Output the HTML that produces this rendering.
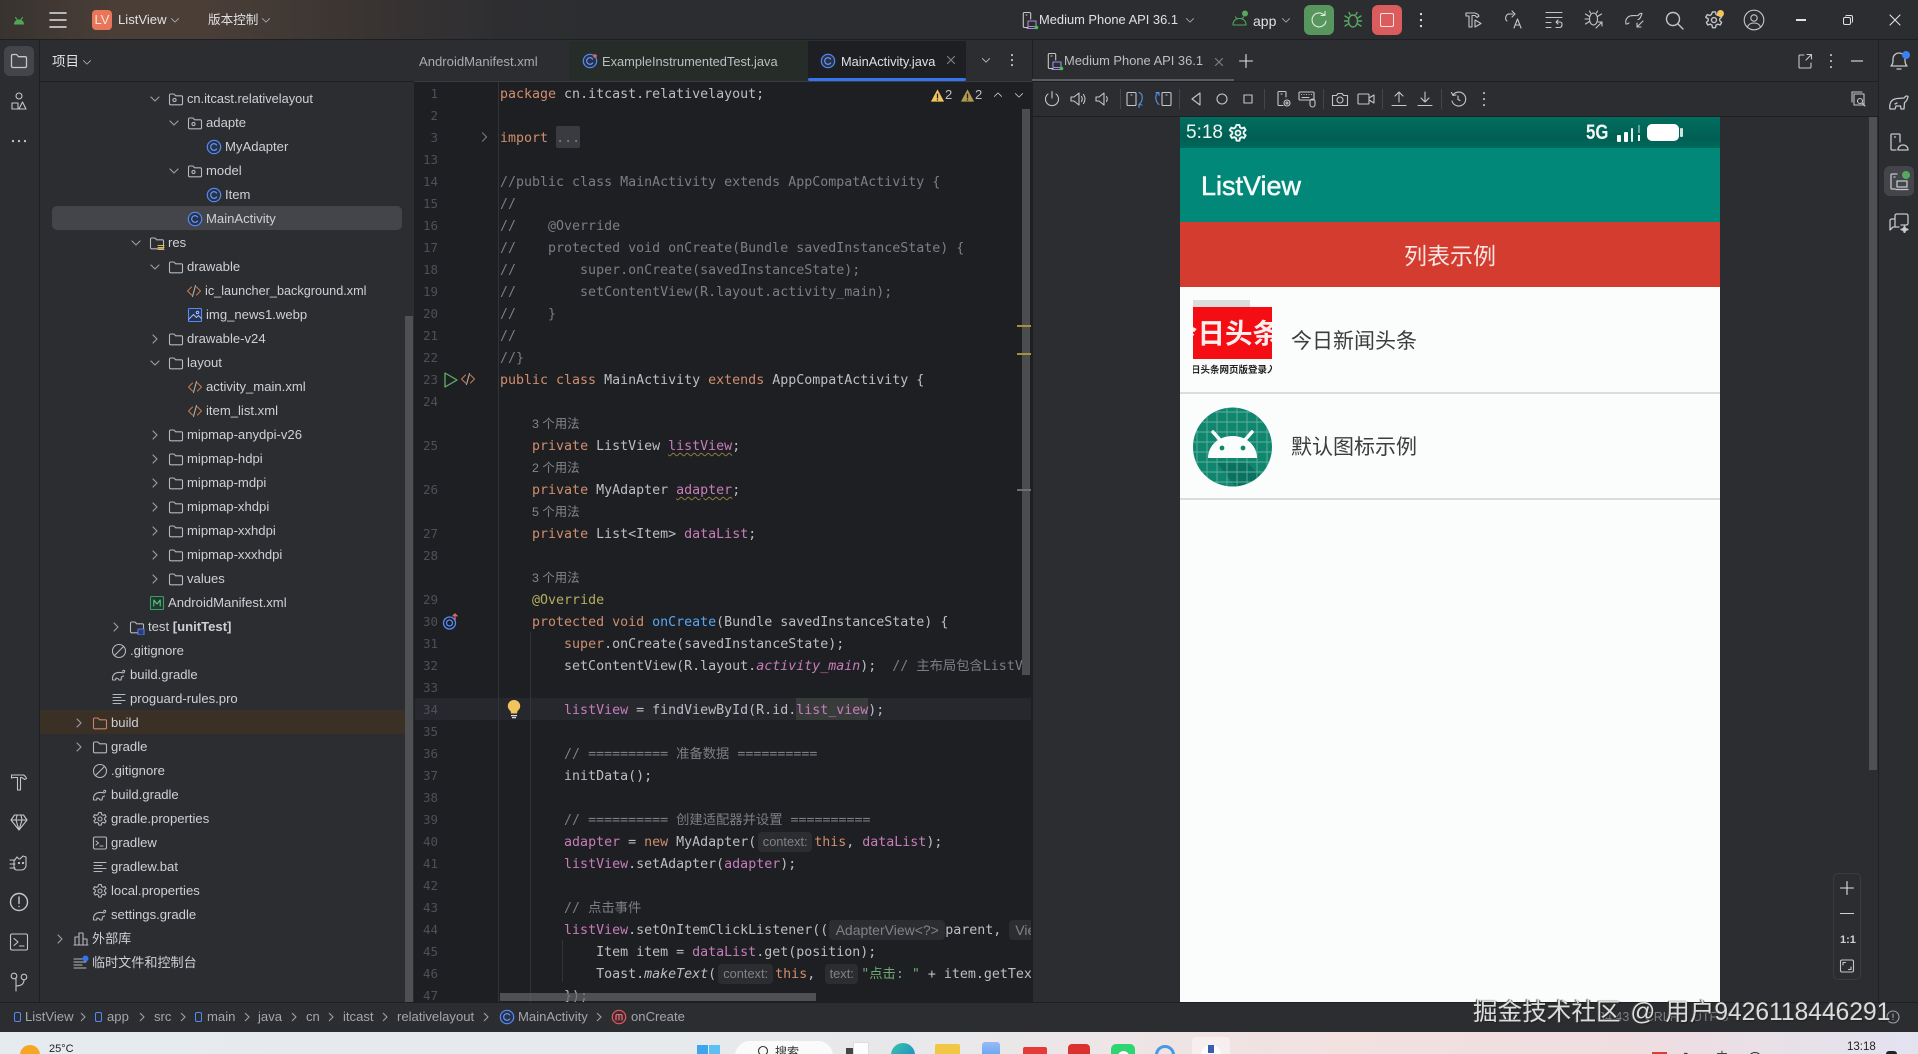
<!DOCTYPE html>
<html lang="zh"><head><meta charset="utf-8"><title>ListView</title>
<style>
*{box-sizing:border-box}
html,body{margin:0;padding:0;width:1918px;height:1054px;overflow:hidden;background:#2b2d30}
body{position:relative;font-family:"Liberation Sans","Noto Sans CJK SC",sans-serif;font-size:13.1px;color:#ced0d6}
.a{position:absolute}
.t{position:absolute;white-space:nowrap}
svg.i{position:absolute;width:20px;height:20px;fill:none;stroke:#c4c6cc;stroke-width:1.1;stroke-linecap:round;stroke-linejoin:round}
.r{position:absolute;height:24px;line-height:24px;white-space:nowrap;display:flex;align-items:center;transform:translateY(1px)}
.r svg{flex:none;fill:none;stroke:#b4b8bf;stroke-width:1.1;stroke-linecap:round;stroke-linejoin:round}
.r svg.ch{width:14px;height:14px;margin-right:6px;stroke:#9da0a8}
.r svg.ic{width:16px;height:16px;margin-right:3px}
pre{margin:0;font-family:"DejaVu Sans Mono","Liberation Mono","Noto Sans CJK SC",monospace;font-size:13.2px;line-height:22px}
#code{position:absolute;left:500px;top:82px;padding-top:2px;width:531px;height:920px;overflow:hidden;color:#bcbec4;font-family:"DejaVu Sans Mono","Liberation Mono","Noto Sans CJK SC",monospace;font-size:13.3px;line-height:22px}
#code div{height:22px;white-space:pre}
#nums{position:absolute;left:410px;top:83px;width:28px;height:919px;overflow:hidden;text-align:right;color:#4b5059;font-size:12.5px}
.k{color:#cf8e6d}.f{color:#c77dbb}.c{color:#7a7e85}.m{color:#56a8f5}.n{color:#b3ae60}.s{color:#6aab73}
.u{display:block;height:22px;line-height:20px;font-family:"Liberation Sans","Noto Sans CJK SC",sans-serif;font-size:12.4px;color:#83868c;margin-left:32px}
.w{text-decoration:underline wavy #8f7c3f 1px;text-underline-offset:2px}
.h{display:inline-block;height:20px;line-height:20px;vertical-align:top;background:#2b2d30;color:#7f8288;border-radius:4px;font-family:"Liberation Sans","Noto Sans CJK SC",sans-serif;font-size:12.8px;text-align:center}
.sep{position:absolute;top:89px;width:1px;height:20px;background:#43454a}
.bc{position:absolute;top:1008px;height:18px;line-height:18px;color:#a3a6ac;font-size:13.1px;white-space:nowrap}
.bch{position:absolute;top:1011px;width:10px;height:12px;fill:none;stroke:#9da0a8;stroke-width:1.1}
</style></head>
<body>
<svg width="0" height="0" style="position:absolute">
<defs>
<symbol id="cr" viewBox="0 0 14 14"><path d="M5 3l4 4-4 4"/></symbol>
<symbol id="cd" viewBox="0 0 14 14"><path d="M3 5l4 4 4-4"/></symbol>
<symbol id="fo" viewBox="0 0 16 16"><path d="M1.5 4.2q0-1.2 1.2-1.2h3.2l1.8 1.8h5.6q1.2 0 1.2 1.2v6.6q0 1.2-1.2 1.2H2.7q-1.2 0-1.2-1.2z"/></symbol>
<symbol id="pk" viewBox="0 0 16 16"><path d="M1.5 4.2q0-1.2 1.2-1.2h3.2l1.8 1.8h5.6q1.2 0 1.2 1.2v6.6q0 1.2-1.2 1.2H2.7q-1.2 0-1.2-1.2z"/><circle cx="6.5" cy="9" r="1.6"/></symbol>
<symbol id="cl" viewBox="0 0 16 16"><circle cx="8" cy="8" r="6.7" fill="#27324c" stroke="#548af7" stroke-width="1.2"/><path d="M10.6 6a3.3 3.3 0 1 0 0 4" stroke="#6f9cf7" fill="none"/></symbol>
<symbol id="xm" viewBox="0 0 16 16"><path d="M5.5 4L1.5 8l4 4M10.5 4l4 4-4 4" stroke="#c4784f" fill="none"/><path d="M9.5 2.5l-3 11" stroke="#b9b2a8" fill="none"/></symbol>
<symbol id="im" viewBox="0 0 16 16"><rect x="1.5" y="1.5" width="13" height="13" rx="1" fill="#27324c" stroke="#548af7"/><path d="M2 12l4.5-4.5 3 3 2-2 3 3" stroke="#9ab8f7" fill="none"/><circle cx="10.5" cy="5.5" r="1.2" stroke="#9ab8f7" fill="none"/></symbol>
<symbol id="mf" viewBox="0 0 16 16"><rect x="1.5" y="1.5" width="13" height="13" rx="1" fill="#1f3a2c" stroke="#3f9a68"/><path d="M4.8 11V5l3.2 4 3.2-4v6" stroke="#57c28b" fill="none"/></symbol>
<symbol id="ig" viewBox="0 0 16 16"><circle cx="8" cy="8" r="6.5"/><path d="M3.5 12.5l9-9"/></symbol>
<symbol id="gr" viewBox="0 0 16 16"><path d="M1.5 13c-.5-3 .8-6 3.5-7 2-.8 5-.6 7-.2 1 .2 2-.8 1.6-2-.8-.8-1.8-.4-2 .5M2.5 13h2l.5-2 2 .5 1 1.500h2l.5-3 2-1"/></symbol>
<symbol id="ge" viewBox="0 0 16 16"><path d="M6.8 1.500h2.400l.4 2 1.400.8 1.900-.7 1.200 2.100-1.500 1.300v1.600l1.500 1.300-1.200 2.100-1.900-.7-1.400.8-.4 2H6.800l-.4-2-1.400-.8-1.900.7-1.200-2.100 1.500-1.300V7.100L1.400 5.800l1.200-2.100 1.900.7 1.400-.8z"/><circle cx="8" cy="8" r="2"/></symbol>
<symbol id="tm" viewBox="0 0 16 16"><rect x="1.5" y="2" width="13" height="12" rx="1.5"/><path d="M4 6l2.500 2L4 10M8 11h3"/></symbol>
<symbol id="tx" viewBox="0 0 16 16"><path d="M2 3.500h12M2 6.500h8M2 9.500h12M2 12.500h8"/></symbol>
<symbol id="dv" viewBox="0 0 20 20"><path d="M9 17.500H5.500q-1.200 0-1.200-1.200V3.700q0-1.200 1.200-1.200h5q1.200 0 1.200 1.200V9"/><path d="M7 5h1"/><rect x="9" y="11" width="8" height="5.500" stroke="#a78bda"/><path d="M8 18.500h10" stroke="#a78bda"/></symbol>
</defs>
</svg>

<!-- title bar -->
<div class="a" style="left:0;top:0;width:1918px;height:40px;background:linear-gradient(90deg,#37332f 0,#4b3e37 6%,#4a3e37 11%,#3b3533 18%,#2e2e31 26%,#2b2d30 32%);border-bottom:1px solid #1e1f22"></div>
<svg class="i" style="left:9px;top:10px;stroke:none;fill:#4fa85a" viewBox="0 0 20 20"><path d="M5 14.500c0-3 2.200-5 5-5s5 2 5 5z"/><path d="M6.500 7.500l1.500 2M13.500 7.500l-1.500 2" stroke="#4fa85a"/></svg>
<svg class="i" style="left:48px;top:10px;stroke:#dfe1e5" viewBox="0 0 20 20"><path d="M2 3h16M2 10h16M2 17h16" stroke-width="1.500"/></svg>
<div class="a" style="left:92px;top:10px;width:20px;height:20px;background:#e8765a;border-radius:4px;color:#fbe3d6;font-size:13px;line-height:20px;text-align:center">LV</div>
<div class="t" style="left:118px;top:12px;line-height:16px;color:#dfe1e5">ListView</div>
<svg class="i" style="left:170px;top:15px;width:10px;height:10px;stroke:#b4b8bf" viewBox="0 0 14 14"><path d="M2 5l5 5 5-5"/></svg>
<div class="t" style="left:208px;top:12px;line-height:16px;color:#dfe1e5;font-size:12.600px">版本控制</div>
<svg class="i" style="left:261px;top:15px;width:10px;height:10px;stroke:#b4b8bf" viewBox="0 0 14 14"><path d="M2 5l5 5 5-5"/></svg>

<svg class="i" style="left:1019px;top:10px" viewBox="0 0 20 20"><use href="#dv"/><circle cx="17.500" cy="17.500" r="1.800" fill="#3ec74a" stroke="none"/></svg>
<div class="t" style="left:1039px;top:12px;line-height:16px;color:#dfe1e5;font-size:12.900px">Medium Phone API 36.1</div>
<svg class="i" style="left:1185px;top:15px;width:10px;height:10px;stroke:#b4b8bf" viewBox="0 0 14 14"><path d="M2 5l5 5 5-5"/></svg>
<svg class="i" style="left:1230px;top:9px;stroke:#4fa85a" viewBox="0 0 20 20"><path d="M3 16c0-4 2.500-6.500 6.500-6.500S16 12 16 16zM5.500 8l1.500 2M13.500 8l-1.500 2"/><circle cx="15" cy="4.500" r="3" fill="#57a85f" stroke="none"/></svg>
<div class="t" style="left:1253px;top:13px;line-height:16px;color:#dfe1e5;font-size:14px">app</div>
<svg class="i" style="left:1281px;top:15px;width:10px;height:10px;stroke:#b4b8bf" viewBox="0 0 14 14"><path d="M2 5l5 5 5-5"/></svg>
<div class="a" style="left:1304px;top:5px;width:30px;height:30px;background:#57965c;border-radius:6px"></div>
<svg class="i" style="left:1309px;top:10px;stroke:#dfe9df" viewBox="0 0 20 20"><path d="M15.500 5.500A7 7 0 1 0 17 11"/><path d="M16 1.500v4h-4"/></svg>
<svg class="i" style="left:1343px;top:10px;stroke:#57a85f;stroke-width:1.400" viewBox="0 0 20 20"><ellipse cx="10" cy="11" rx="4.500" ry="6"/><path d="M2 6l4 2.500M18 6l-4 2.500M1.500 11h4M18.500 11h-4M2 16l4-2.500M18 16l-4-2.500M7 4.500l-1-2M13 4.500l1-2"/></svg>
<div class="a" style="left:1372px;top:5px;width:30px;height:30px;background:#db5c5c;border-radius:6px"></div>
<div class="a" style="left:1380px;top:13px;width:14px;height:14px;border:1.500px solid #fbe3e3;border-radius:2px"></div>
<svg class="i" style="left:1411px;top:10px;stroke:#dfe1e5;stroke-width:2.200" viewBox="0 0 20 20"><path d="M10 4v.1M10 10v.1M10 16v.1"/></svg>

<svg class="i" style="left:1464px;top:10px" viewBox="0 0 20 20"><path d="M2 3h9q3 1 4 3l-2 1.500-2-2H8v11.500H5V6H2z"/><path d="M11 10l6 3.500-6 3.500z"/></svg>
<svg class="i" style="left:1504px;top:10px" viewBox="0 0 20 20"><path d="M9 4H6a4 4 0 0 0-3 7"/><path d="M8 1l3 3-3 3"/><path d="M10 18l3.500-9 3.500 9M11 15h5"/></svg>
<svg class="i" style="left:1544px;top:10px" viewBox="0 0 20 20"><path d="M2 2.500h16M2 7.500h16M2 12.500h5M2 17.500h5"/><path d="M12 12h4q2 0 2 2.500T16 17.500h-4M12 12l2-2M12 12l2 2"/></svg>
<svg class="i" style="left:1584px;top:10px" viewBox="0 0 20 20"><ellipse cx="9.500" cy="9" rx="4" ry="6"/><path d="M1.500 4l4 2.500M17.500 4l-4 2.500M1 9h4M1.500 14l4-2.500M6.500 3L5.500 1M12.500 3l1-2"/><path d="M12 18l6-6M14 12h4v4"/></svg>
<svg class="i" style="left:1624px;top:10px" viewBox="0 0 20 20"><path d="M2 14c-1-4 1-7 4-8 3-1 6 0 8-.5 1-1 2-3 4-2-1 3-2 6-4 6M3 14l2-1"/><path d="M19 11l-6 6M13 13v4h4"/></svg>
<svg class="i" style="left:1664px;top:10px;stroke-width:1.400" viewBox="0 0 20 20"><circle cx="9" cy="9" r="6.500"/><path d="M14 14l5 5"/></svg>
<svg class="i" style="left:1704px;top:10px;width:20px;height:20px" viewBox="0 0 16 16"><use href="#ge"/></svg>
<div class="a" style="left:1717px;top:10px;width:7px;height:7px;background:#f2c55c;border-radius:50%"></div>
<svg class="i" style="left:1743px;top:9px;width:22px;height:22px;stroke-width:1.100" viewBox="0 0 22 22"><circle cx="11" cy="11" r="9.800"/><circle cx="11" cy="9" r="3.200"/><path d="M4.500 18c1-3 4-4 6.500-4s5.500 1 6.500 4"/></svg>
<div class="a" style="left:1796px;top:19px;width:10px;height:1.500px;background:#dfe1e5"></div>
<div class="a" style="left:1843px;top:17px;width:8px;height:8px;border:1.300px solid #dfe1e5;border-radius:2px"></div>
<div class="a" style="left:1845px;top:15px;width:8px;height:8px;border-top:1.300px solid #dfe1e5;border-right:1.300px solid #dfe1e5;border-radius:2px"></div>
<svg class="i" style="left:1885px;top:10px;stroke:#dfe1e5" viewBox="0 0 20 20"><path d="M5 5l10 10M15 5L5 15"/></svg>

<!-- left stripe -->
<div class="a" style="left:0;top:40px;width:40px;height:962px;border-right:1px solid #1e1f22;background:#2b2d30"></div>
<div class="a" style="left:4px;top:46px;width:30px;height:30px;background:#43454a;border-radius:6px"></div>
<svg class="i" style="left:9px;top:51px;stroke-width:1.300" viewBox="0 0 20 20"><path d="M2.500 5q0-1.500 1.500-1.500h3.500l2 2.200H16q1.500 0 1.500 1.500v7.800q0 1.500-1.500 1.500H4q-1.500 0-1.500-1.500z"/></svg>
<svg class="i" style="left:9px;top:91px" viewBox="0 0 20 20"><circle cx="10" cy="5" r="3"/><rect x="3" y="12" width="6" height="6"/><path d="M13.500 11l3.500 7h-7z"/></svg>
<svg class="i" style="left:9px;top:131px;stroke-width:2.200" viewBox="0 0 20 20"><path d="M4 10v.1M10 10v.1M16 10v.1"/></svg>
<svg class="i" style="left:9px;top:772px" viewBox="0 0 20 20"><path d="M2.500 3h12q2 1 3 3.500l-2 1-2.500-2H11.500V18h-3V5.500H4.500L2.500 6z"/></svg>
<svg class="i" style="left:9px;top:812px" viewBox="0 0 20 20"><path d="M5.500 3h9l3.500 5-8 10-8-10zM2 8h16M7 8l3 10 3-10M7 8l1-5M13 8l-1-5"/></svg>
<svg class="i" style="left:9px;top:853px" viewBox="0 0 20 20"><path d="M8 4l2 2h1l3-3 3 1v9q-1 4-5 4H8q-2 0-3-2V8zM1 7h5M1 11h5M1 15h5"/><circle cx="10" cy="10" r=".6"/><circle cx="14" cy="10" r=".6"/></svg>
<svg class="i" style="left:9px;top:892px;stroke-width:1.400" viewBox="0 0 20 20"><circle cx="10" cy="10" r="8.500"/><path d="M10 5v6.500M10 14.500v.1"/></svg>
<svg class="i" style="left:9px;top:932px" viewBox="0 0 20 20"><rect x="1.500" y="2" width="17" height="16" rx="1.500"/><path d="M5 6.500L9 10l-4 3.500M10.500 14H15"/></svg>
<svg class="i" style="left:9px;top:972px" viewBox="0 0 20 20"><circle cx="5" cy="4" r="2.800"/><circle cx="15" cy="5" r="2.800"/><path d="M7 19V6.800M7 14q8 0 8-6.200"/></svg>

<!-- project panel -->
<div class="a" style="left:40px;top:81px;width:374px;height:1px;background:#1e1f22"></div>
<div class="t" style="left:52px;top:54px;line-height:16px;color:#dfe1e5;font-size:13.500px">项目</div>
<svg class="i" style="left:82px;top:57px;width:10px;height:10px;stroke:#b4b8bf" viewBox="0 0 14 14"><path d="M2 5l5 5 5-5"/></svg>
<div class="a" style="left:52px;top:206px;width:350px;height:24px;background:#43454a;border-radius:5px"></div>
<div class="a" style="left:40px;top:710px;width:372px;height:24px;background:#3a3025"></div>
<div class="a" style="left:405px;top:316px;width:8px;height:686px;background:#4e5054"></div>

<div class="r" style="top:86px;left:148px"><svg class="ch"><use href="#cd"/></svg><svg class="ic"><use href="#pk"/></svg><span style="font-size:12.800px">cn.itcast.relativelayout</span></div>
<div class="r" style="top:110px;left:167px"><svg class="ch"><use href="#cd"/></svg><svg class="ic"><use href="#pk"/></svg>adapte</div>
<div class="r" style="top:134px;left:206px"><svg class="ic"><use href="#cl"/></svg>MyAdapter</div>
<div class="r" style="top:158px;left:167px"><svg class="ch"><use href="#cd"/></svg><svg class="ic"><use href="#pk"/></svg>model</div>
<div class="r" style="top:182px;left:206px"><svg class="ic"><use href="#cl"/></svg>Item</div>
<div class="r" style="top:206px;left:187px"><svg class="ic"><use href="#cl"/></svg>MainActivity</div>
<div class="r" style="top:230px;left:129px"><svg class="ch"><use href="#cd"/></svg><svg class="ic" viewBox="0 0 16 16"><use href="#fo"/><path d="M9 10.500h6M9 12.500h6M9 14.500h6" stroke="#e0b84e" fill="none"/></svg>res</div>
<div class="r" style="top:254px;left:148px"><svg class="ch"><use href="#cd"/></svg><svg class="ic"><use href="#fo"/></svg>drawable</div>
<div class="r" style="top:278px;left:186px"><svg class="ic"><use href="#xm"/></svg><span style="font-size:12.700px">ic_launcher_background.xml</span></div>
<div class="r" style="top:302px;left:187px"><svg class="ic"><use href="#im"/></svg>img_news1.webp</div>
<div class="r" style="top:326px;left:148px"><svg class="ch"><use href="#cr"/></svg><svg class="ic"><use href="#fo"/></svg>drawable-v24</div>
<div class="r" style="top:350px;left:148px"><svg class="ch"><use href="#cd"/></svg><svg class="ic"><use href="#fo"/></svg>layout</div>
<div class="r" style="top:374px;left:187px"><svg class="ic"><use href="#xm"/></svg>activity_main.xml</div>
<div class="r" style="top:398px;left:187px"><svg class="ic"><use href="#xm"/></svg>item_list.xml</div>
<div class="r" style="top:422px;left:148px"><svg class="ch"><use href="#cr"/></svg><svg class="ic"><use href="#fo"/></svg>mipmap-anydpi-v26</div>
<div class="r" style="top:446px;left:148px"><svg class="ch"><use href="#cr"/></svg><svg class="ic"><use href="#fo"/></svg>mipmap-hdpi</div>
<div class="r" style="top:470px;left:148px"><svg class="ch"><use href="#cr"/></svg><svg class="ic"><use href="#fo"/></svg>mipmap-mdpi</div>
<div class="r" style="top:494px;left:148px"><svg class="ch"><use href="#cr"/></svg><svg class="ic"><use href="#fo"/></svg>mipmap-xhdpi</div>
<div class="r" style="top:518px;left:148px"><svg class="ch"><use href="#cr"/></svg><svg class="ic"><use href="#fo"/></svg>mipmap-xxhdpi</div>
<div class="r" style="top:542px;left:148px"><svg class="ch"><use href="#cr"/></svg><svg class="ic"><use href="#fo"/></svg>mipmap-xxxhdpi</div>
<div class="r" style="top:566px;left:148px"><svg class="ch"><use href="#cr"/></svg><svg class="ic"><use href="#fo"/></svg>values</div>
<div class="r" style="top:590px;left:149px"><svg class="ic"><use href="#mf"/></svg>AndroidManifest.xml</div>
<div class="r" style="top:614px;left:109px"><svg class="ch"><use href="#cr"/></svg><svg class="ic" viewBox="0 0 16 16"><use href="#fo"/><rect x="9" y="10" width="6" height="6" fill="#2b3a70" stroke="#4f7bf0"/></svg>test&nbsp;<b>[unitTest]</b></div>
<div class="r" style="top:638px;left:111px"><svg class="ic"><use href="#ig"/></svg>.gitignore</div>
<div class="r" style="top:662px;left:111px"><svg class="ic"><use href="#gr"/></svg>build.gradle</div>
<div class="r" style="top:686px;left:111px"><svg class="ic"><use href="#tx"/></svg>proguard-rules.pro</div>
<div class="r" style="top:710px;left:72px"><svg class="ch"><use href="#cr"/></svg><svg class="ic" style="stroke:#c9826a"><use href="#fo"/></svg>build</div>
<div class="r" style="top:734px;left:72px"><svg class="ch"><use href="#cr"/></svg><svg class="ic"><use href="#fo"/></svg>gradle</div>
<div class="r" style="top:758px;left:92px"><svg class="ic"><use href="#ig"/></svg>.gitignore</div>
<div class="r" style="top:782px;left:92px"><svg class="ic"><use href="#gr"/></svg>build.gradle</div>
<div class="r" style="top:806px;left:92px"><svg class="ic"><use href="#ge"/></svg>gradle.properties</div>
<div class="r" style="top:830px;left:92px"><svg class="ic"><use href="#tm"/></svg>gradlew</div>
<div class="r" style="top:854px;left:92px"><svg class="ic"><use href="#tx"/></svg>gradlew.bat</div>
<div class="r" style="top:878px;left:92px"><svg class="ic"><use href="#ge"/></svg>local.properties</div>
<div class="r" style="top:902px;left:92px"><svg class="ic"><use href="#gr"/></svg>settings.gradle</div>
<div class="r" style="top:926px;left:53px"><svg class="ch"><use href="#cr"/></svg><svg class="ic" viewBox="0 0 16 16"><path d="M2 14V6h4v8M6 14V2h4v12M10 14V8h4v6M1 14h14"/></svg>外部库</div>
<div class="r" style="top:950px;left:73px"><svg class="ic" viewBox="0 0 16 16"><path d="M1 6h8M1 9h12M1 12h8M1 15h12" transform="translate(0 -2)"/><circle cx="12.500" cy="3.500" r="3" fill="#3574f0" stroke="none"/></svg>临时文件和控制台</div>

<!-- editor -->
<div class="a" style="left:414px;top:41px;width:618px;height:40px;background:#2b2d30"></div>
<div class="a" style="left:414px;top:81px;width:618px;height:921px;background:#1e1f22;border-top:1px solid #393b40"></div>
<div class="a" style="left:569px;top:41px;width:239px;height:39px;background:#262c27"></div>
<div class="a" style="left:808px;top:41px;width:158px;height:40px;background:#1e1f22"></div>
<div class="t" style="left:419px;top:54px;line-height:16px;color:#a8abb1;font-size:13.100px">AndroidManifest.xml</div>
<svg class="i" style="left:582px;top:53px;width:16px;height:16px" viewBox="0 0 16 16"><use href="#cl"/><circle cx="13" cy="3" r="1.800" fill="#d86c6c" stroke="none"/></svg>
<div class="t" style="left:602px;top:54px;line-height:16px;color:#bcbec4;font-size:12.850px">ExampleInstrumentedTest.java</div>
<svg class="i" style="left:820px;top:53px;width:16px;height:16px" viewBox="0 0 16 16"><use href="#cl"/></svg>
<div class="t" style="left:841px;top:54px;line-height:16px;color:#dfe1e5;font-size:12.800px">MainActivity.java</div>
<svg class="i" style="left:946px;top:55px;width:10px;height:10px;stroke:#7f8288" viewBox="0 0 10 10"><path d="M1.500 1.500l7 7M8.500 1.500l-7 7"/></svg>
<div class="a" style="left:808px;top:78px;width:158px;height:3px;background:#3574f0;border-radius:2px"></div>
<svg class="i" style="left:981px;top:55px;width:10px;height:10px;stroke:#ced0d6" viewBox="0 0 14 14"><path d="M2 5l5 5 5-5"/></svg>
<svg class="i" style="left:1002px;top:50px;stroke:#ced0d6;stroke-width:2" viewBox="0 0 20 20"><path d="M10 5v.1M10 10v.1M10 15v.1"/></svg>

<div class="a" style="left:415px;top:698px;width:616px;height:22px;background:#26282e"></div>
<div class="a" style="left:796px;top:698px;width:72px;height:22px;background:#373b39"></div>
<div class="a" style="left:556px;top:126px;width:24px;height:22px;background:#393b40;border-radius:2px"></div>
<div class="a" style="left:498px;top:82px;width:1px;height:920px;background:#313438"></div>
<div class="a" style="left:530px;top:632px;width:1px;height:370px;background:#313438"></div>
<div class="a" style="left:562px;top:940px;width:1px;height:42px;background:#313438"></div>

<pre id="nums">1
2
3
13
14
15
16
17
18
19
20
21
22
23
24

25

26

27
28

29
30
31
32
33
34
35
36
37
38
39
40
41
42
43
44
45
46
47</pre>
<div id="code">
<div><span class="k">package</span> cn.itcast.relativelayout;</div>
<div></div>
<div><span class="k">import</span> <span class="c">...</span></div>
<div></div>
<div><span class="c">//public class MainActivity extends AppCompatActivity {</span></div>
<div><span class="c">//</span></div>
<div><span class="c">//    @Override</span></div>
<div><span class="c">//    protected void onCreate(Bundle savedInstanceState) {</span></div>
<div><span class="c">//        super.onCreate(savedInstanceState);</span></div>
<div><span class="c">//        setContentView(R.layout.activity_main);</span></div>
<div><span class="c">//    }</span></div>
<div><span class="c">//</span></div>
<div><span class="c">//}</span></div>
<div><span class="k">public class</span> MainActivity <span class="k">extends</span> AppCompatActivity {</div>
<div></div>
<div><span class="u">3 个用法</span></div>
<div>    <span class="k">private</span> ListView <span class="f w">listView</span>;</div>
<div><span class="u">2 个用法</span></div>
<div>    <span class="k">private</span> MyAdapter <span class="f w">adapter</span>;</div>
<div><span class="u">5 个用法</span></div>
<div>    <span class="k">private</span> List&lt;Item&gt; <span class="f">dataList</span>;</div>
<div></div>
<div><span class="u">3 个用法</span></div>
<div>    <span class="n">@Override</span></div>
<div>    <span class="k">protected void</span> <span class="m">onCreate</span>(Bundle savedInstanceState) {</div>
<div>        <span class="k">super</span>.onCreate(savedInstanceState);</div>
<div>        setContentView(R.layout.<span class="f"><i>activity_main</i></span>);  <span class="c">// 主布局包含ListView</span></div>
<div></div>
<div>        <span class="f">listView</span> = findViewById(R.id.<span class="f">list_view</span>);</div>
<div></div>
<div>        <span class="c">// ========== 准备数据 ==========</span></div>
<div>        initData();</div>
<div></div>
<div>        <span class="c">// ========== 创建适配器并设置 ==========</span></div>
<div>        <span class="f">adapter</span> = <span class="k">new</span> MyAdapter(<span class="h" style="width:54px;margin:0 2px 0 2px">context:</span><span class="k">this</span>, <span class="f">dataList</span>);</div>
<div>        <span class="f">listView</span>.setAdapter(<span class="f">adapter</span>);</div>
<div></div>
<div>        <span class="c">// 点击事件</span></div>
<div>        <span class="f">listView</span>.setOnItemClickListener((<span class="h" style="width:116px;margin:0 0 0 1px;font-size:14px">AdapterView&lt;?&gt;</span>parent,<span class="h" style="width:40px;margin:0 0 0 8px;text-align:left;padding-left:6px;font-size:14px">View</span></div>
<div>            Item item = <span class="f">dataList</span>.get(position);</div>
<div>            Toast.<i>makeText</i>(<span class="h" style="width:55px;margin:0 2px 0 2px">context:</span><span class="k">this</span>,<span class="h" style="width:33px;margin:0 3px 0 10px">text:</span><span class="s">"点击: "</span> + item.getText());</div>
<div>        });</div>
</div>

<!-- gutter icons -->
<svg class="i" style="left:478px;top:131px;width:12px;height:12px;stroke:#7f8288" viewBox="0 0 14 14"><path d="M5 2l5 5-5 5"/></svg>
<svg class="i" style="left:441px;top:370px;stroke:#5fad65;stroke-width:1.300" viewBox="0 0 20 20"><path d="M4 3l12 7-12 7z"/></svg>
<svg class="i" style="left:460px;top:371px;width:16px;height:16px" viewBox="0 0 16 16"><use href="#xm"/></svg>
<svg class="i" style="left:441px;top:612px;stroke:#548af7;stroke-width:1.300" viewBox="0 0 20 20"><circle cx="8.500" cy="11" r="6"/><circle cx="8.500" cy="11" r="3"/><path d="M14 8V2M12 4l2-2 2 2" stroke="#e06c6c"/></svg>
<svg class="i" style="left:504px;top:699px;stroke:none;fill:#f2c55c" viewBox="0 0 20 20"><path d="M10 1a6 6 0 0 0-3.500 11l.5 2.500h6l.5-2.500A6 6 0 0 0 10 1z"/><path d="M7 16h6v1.200H7zM8 18h4v1.200H8z" fill="#dfe1e5"/></svg>

<!-- warnings -->
<svg class="i" style="left:930px;top:88px;width:15px;height:15px;stroke:none;fill:#f2c55c" viewBox="0 0 16 16"><path d="M8 1.500l7 13H1z"/><path d="M7.300 6h1.400v5H7.300zM7.300 12h1.400v1.300H7.300z" fill="#1e1f22"/></svg>
<div class="t" style="left:945px;top:87px;line-height:16px;color:#bcbec4">2</div>
<svg class="i" style="left:960px;top:88px;width:15px;height:15px;stroke:none;fill:#b39a4f" viewBox="0 0 16 16"><path d="M8 1.500l7 13H1z"/><path d="M7.300 6h1.400v5H7.300zM7.300 12h1.400v1.300H7.300z" fill="#1e1f22"/></svg>
<div class="t" style="left:975px;top:87px;line-height:16px;color:#bcbec4">2</div>
<svg class="i" style="left:993px;top:90px;width:10px;height:10px;stroke:#ced0d6" viewBox="0 0 14 14"><path d="M2 9l5-5 5 5"/></svg>
<svg class="i" style="left:1014px;top:90px;width:10px;height:10px;stroke:#ced0d6" viewBox="0 0 14 14"><path d="M2 5l5 5 5-5"/></svg>

<!-- editor scrollbars -->
<div class="a" style="left:1022px;top:109px;width:8px;height:566px;background:#4a4c50"></div>
<div class="a" style="left:1017px;top:325px;width:14px;height:2px;background:#a88f3c"></div>
<div class="a" style="left:1017px;top:353px;width:14px;height:2px;background:#a88f3c"></div>
<div class="a" style="left:1017px;top:489px;width:14px;height:2px;background:#6b6d70"></div>
<div class="a" style="left:500px;top:993px;width:316px;height:8px;background:rgba(95,97,102,.75)"></div>

<!-- emulator panel -->
<div class="a" style="left:1032px;top:40px;width:1px;height:962px;background:#1e1f22"></div>
<div class="a" style="left:1033px;top:81px;width:845px;height:1px;background:#1e1f22"></div>
<div class="a" style="left:1033px;top:116px;width:845px;height:1px;background:#1e1f22"></div>
<div class="a" style="left:1878px;top:40px;width:1px;height:962px;background:#1e1f22"></div>
<svg class="i" style="left:1044px;top:51px" viewBox="0 0 20 20"><use href="#dv"/><circle cx="17.500" cy="17.500" r="1.800" fill="#3ec74a" stroke="none"/></svg>
<div class="t" style="left:1064px;top:53px;line-height:16px;color:#bcbec4;font-size:12.900px">Medium Phone API 36.1</div>
<svg class="i" style="left:1214px;top:57px;width:10px;height:10px;stroke:#7f8288" viewBox="0 0 10 10"><path d="M1.500 1.500l7 7M8.500 1.500l-7 7"/></svg>
<svg class="i" style="left:1236px;top:51px;stroke:#dfe1e5" viewBox="0 0 20 20"><path d="M10 3.500v13M3.500 10h13"/></svg>
<div class="a" style="left:1032px;top:79px;width:202px;height:2px;background:#5a5d63"></div>
<svg class="i" style="left:1795px;top:51px" viewBox="0 0 20 20"><path d="M9 4H5q-1 0-1 1v11q0 1 1 1h10q1 0 1-1v-4M11 9l5-5M12 3.500h4.500V8"/></svg>
<svg class="i" style="left:1821px;top:51px;stroke-width:2" viewBox="0 0 20 20"><path d="M10 4v.1M10 10v.1M10 16v.1"/></svg>
<div class="a" style="left:1851px;top:60px;width:12px;height:1.500px;background:#8d9096"></div>

<svg class="i" style="left:1042px;top:89px" viewBox="0 0 20 20"><path d="M6 5a6.500 6.500 0 1 0 8 0M10 2.500V9"/></svg>
<svg class="i" style="left:1068px;top:89px" viewBox="0 0 20 20"><path d="M3 8v4h3l5 4V4L6 8zM13.500 7.500q1.500 2.500 0 5M15.500 5.500q3 4.500 0 9"/></svg>
<svg class="i" style="left:1092px;top:89px" viewBox="0 0 20 20"><path d="M4 8v4h3l5 4V4L7 8zM14.500 7.500q1.500 2.500 0 5"/></svg>
<div class="sep" style="left:1120px"></div>
<svg class="i" style="left:1125px;top:89px" viewBox="0 0 20 20"><rect x="2" y="3.500" width="9" height="13" rx="1"/><path d="M6 6h1"/><path d="M14 3.500q4 1 3 7-.5 3-3 5M14 15.500l3 .5M14 15.500v3" stroke="#5b8ee8"/></svg>
<svg class="i" style="left:1153px;top:89px" viewBox="0 0 20 20"><rect x="9" y="3.500" width="9" height="13" rx="1"/><path d="M13 6h1"/><path d="M6 3.500q-4 1-3 7 .5 3 3 5M6 3.500v3M6 3.500l-3 0" stroke="#5b8ee8"/></svg>
<div class="sep" style="left:1179px"></div>
<svg class="i" style="left:1186px;top:89px" viewBox="0 0 20 20"><path d="M14 4v12L6 10z"/></svg>
<svg class="i" style="left:1212px;top:89px" viewBox="0 0 20 20"><circle cx="10" cy="10" r="5"/></svg>
<svg class="i" style="left:1238px;top:89px" viewBox="0 0 20 20"><rect x="6" y="6" width="8" height="8"/></svg>
<div class="sep" style="left:1264px"></div>
<svg class="i" style="left:1273px;top:89px" viewBox="0 0 20 20"><path d="M10 16.500H6q-1 0-1-1v-12q0-1 1-1h6q1 0 1 1V8M8 5h1"/><circle cx="14" cy="14" r="3"/><circle cx="14" cy="14" r="1"/></svg>
<svg class="i" style="left:1297px;top:89px" viewBox="0 0 20 20"><rect x="2" y="3" width="15" height="8" rx="1"/><path d="M4.500 5.500h.1M7 5.500h.1M9.500 5.500h.1M12 5.500h.1M14.500 5.500h.1M5 8.500h7"/><rect x="13" y="10" width="5" height="8" rx="2.500"/></svg>
<div class="sep" style="left:1323px"></div>
<svg class="i" style="left:1330px;top:89px" viewBox="0 0 20 20"><path d="M2.500 6.500h4l1.500-2h4l1.500 2h4v10h-15z"/><circle cx="10" cy="11" r="3"/></svg>
<svg class="i" style="left:1356px;top:89px" viewBox="0 0 20 20"><rect x="2" y="5" width="11" height="10" rx="1"/><path d="M13 9l5-3v8l-5-3"/></svg>
<div class="sep" style="left:1382px"></div>
<svg class="i" style="left:1389px;top:89px" viewBox="0 0 20 20"><path d="M10 13V3M6 7l4-4 4 4M3 16.500h14"/></svg>
<svg class="i" style="left:1415px;top:89px" viewBox="0 0 20 20"><path d="M10 3v10M6 9l4 4 4-4M3 16.500h14"/></svg>
<div class="sep" style="left:1441px"></div>
<svg class="i" style="left:1448px;top:89px" viewBox="0 0 20 20"><path d="M5 6a7 7 0 1 1-1 6M3.500 3.500L5 6.500l3-.5M10 7v3.500l2 1"/></svg>
<svg class="i" style="left:1474px;top:89px;stroke-width:2" viewBox="0 0 20 20"><path d="M10 4v.1M10 10v.1M10 16v.1"/></svg>
<svg class="i" style="left:1848px;top:89px" viewBox="0 0 20 20"><path d="M14 3H4v10M6 5h10v11H6z"/><circle cx="12" cy="12" r="2.500"/><path d="M14 14l3 3"/></svg>

<!-- phone -->
<div class="a" style="left:1180px;top:117px;width:540px;height:885px;background:#fbfcfc;overflow:hidden">
  <div class="a" style="left:0;top:0;width:540px;height:31px;background:linear-gradient(#006e60,#005f53 70%,#00695c)"></div>
  <div class="t" style="left:6px;top:5px;line-height:22px;font-size:19px;color:#eef6f4">5:18</div>
  <svg class="i" style="left:48px;top:6px;stroke:#eef6f4;stroke-width:1.500" viewBox="0 0 16 16"><use href="#ge"/></svg>
  <div class="t" style="left:406px;top:3px;line-height:26px;font-size:21px;font-weight:bold;color:#f3f8f7;transform-origin:left;transform:scaleX(.8)">5G</div>
  <div class="a" style="left:437px;top:18px;width:4px;height:7px;background:#fff;border-radius:1px"></div>
  <div class="a" style="left:444px;top:15px;width:4px;height:10px;background:#fff;border-radius:1px"></div>
  <div class="a" style="left:451px;top:11px;width:2px;height:14px;background:#e6f2f0;border-radius:1px"></div>
  <div class="a" style="left:458px;top:8px;width:2px;height:8px;background:#5aa79b"></div>
  <div class="a" style="left:458px;top:18px;width:2px;height:6px;background:#fff"></div>
  <div class="a" style="left:467px;top:7px;width:32px;height:17px;background:#fff;border-radius:5px"></div>
  <div class="a" style="left:500px;top:11px;width:2.500px;height:9px;background:#cfe3df;border-radius:1px"></div>
  <div class="a" style="left:0;top:31px;width:540px;height:74px;background:#018878"></div>
  <div class="t" style="left:21px;top:53px;line-height:32px;font-size:27px;color:#f7fbfa;-webkit-text-stroke:.5px #f7fbfa">ListView</div>
  <div class="a" style="left:0;top:105px;width:540px;height:65px;background:#d43c30;color:#f6e6e4;text-align:center;line-height:69px;font-size:23px">列表示例</div>
  <!-- row 1 -->
  <div class="a" style="left:13px;top:183px;width:79px;height:75px;background:#fbfbfb;overflow:hidden">
    <div class="a" style="left:0;top:0;width:57px;height:7px;background:#dcdcdc"></div>
    <div class="a" style="left:0;top:7px;width:79px;height:52px;background:#f40d13;color:#fdeeee;font-weight:bold;font-size:27.500px;line-height:54px;white-space:nowrap;overflow:hidden"><span style="margin-left:-23px">今日头条</span></div>
    <div class="t" style="left:-2px;top:65px;font-size:9.500px;line-height:11px;font-weight:bold;color:#222">日头条网页版登录入口</div>
  </div>
  <div class="t" style="left:111px;top:210px;line-height:30px;font-size:21px;color:#3c3c3c">今日新闻头条</div>
  <div class="a" style="left:0;top:275px;width:540px;height:1.500px;background:#dcdcdc"></div>
  <!-- row 2 -->
  <svg class="a" style="left:13px;top:290px" width="79" height="80" viewBox="0 0 79 80">
    <defs><clipPath id="cc"><circle cx="39.5" cy="40" r="39.5"/></clipPath></defs>
    <circle cx="39.5" cy="40" r="39.5" fill="#10866f"/>
    <g clip-path="url(#cc)">
      <path d="M24 56h31L80 82v2H46z" fill="#0a6b5c" opacity=".8"/>
      <path d="M4 0v80M14 0v80M24 0v80M34 0v80M44 0v80M54 0v80M64 0v80M74 0v80M0 5h79M0 15h79M0 25h79M0 35h79M0 45h79M0 55h79M0 65h79M0 75h79" stroke="#5fb09d" stroke-width=".9" fill="none"/>
      <path d="M15 51c0-12 10-22 24.500-22S64 39 64 51z" fill="#fbfdfc"/>
      <path d="M28 34l-8-9M51 34l8-9" stroke="#fbfdfc" stroke-width="3.500" stroke-linecap="round"/>
      <circle cx="29" cy="41" r="2.400" fill="#10866f"/><circle cx="50" cy="41" r="2.400" fill="#10866f"/>
    </g>
  </svg>
  <div class="t" style="left:111px;top:316px;line-height:30px;font-size:21px;color:#3c3c3c">默认图标示例</div>
  <div class="a" style="left:0;top:381px;width:540px;height:1.500px;background:#dcdcdc"></div>
</div>
<div class="a" style="left:1869px;top:117px;width:8px;height:653px;background:#4e5054"></div>

<!-- zoom control -->
<div class="a" style="left:1833px;top:873px;width:28px;height:107px;border:1px solid #393b40;border-radius:5px"></div>
<svg class="i" style="left:1837px;top:878px;stroke:#dfe1e5" viewBox="0 0 20 20"><path d="M10 3.500v13M3.500 10h13"/></svg>
<div class="a" style="left:1840px;top:913px;width:14px;height:1.200px;background:#ced0d6"></div>
<div class="t" style="left:1840px;top:932px;line-height:16px;font-size:11px;font-weight:bold;color:#ced0d6">1:1</div>
<svg class="i" style="left:1839px;top:958px;width:16px;height:16px" viewBox="0 0 16 16"><rect x="1.500" y="2" width="13" height="12" rx="1.500"/><path d="M4 7V4.500h2.500M12 9v2.500H9.500"/></svg>

<!-- right stripe -->
<svg class="i" style="left:1888px;top:50px;width:22px;height:22px;stroke-width:1.300" viewBox="0 0 22 22"><path d="M3 16c2-2 2-4 2-7a6 6 0 0 1 12 0c0 3 0 5 2 7zM9 19h4"/></svg>
<div class="a" style="left:1902px;top:51px;width:8px;height:8px;background:#3d7ff0;border-radius:50%"></div>
<svg class="i" style="left:1888px;top:91px;width:22px;height:22px;stroke-width:1.300" viewBox="0 0 22 22"><path d="M2 18c-1-5 1-9 5-10 3-1 7-.5 9-1 1-1 2-3 4-1.500-.5 2.500-1.500 5-3.500 6l-.5 6.500h-3l-.5-3H8l-1 3H4zM7 13l2-1"/></svg>
<svg class="i" style="left:1888px;top:131px;width:22px;height:22px;stroke-width:1.300" viewBox="0 0 22 22"><path d="M8 19H4q-1 0-1-1V4q0-1 1-1h7q1 0 1 1v7M6.500 6h1M10 19c0-3 2-5 5-5s5 2 5 5z"/></svg>
<div class="a" style="left:1884px;top:166px;width:30px;height:30px;background:#43454a;border-radius:6px"></div>
<svg class="i" style="left:1888px;top:170px;width:22px;height:22px;stroke-width:1.300" viewBox="0 0 22 22"><path d="M7 19H4q-1 0-1-1V5q0-1 1-1h5M6 7h1"/><rect x="9" y="11" width="10" height="6"/><path d="M8 19.500h12"/></svg>
<div class="a" style="left:1902px;top:171px;width:8px;height:8px;background:#57a85f;border-radius:50%"></div>
<svg class="i" style="left:1888px;top:211px;width:22px;height:22px;stroke-width:1.300" viewBox="0 0 22 22"><path d="M7 15V5q0-2 2-2h9q2 0 2 2v7q0 2-2 2h-5M7 8H4q-2 0-2 2v9l3-3h6"/><path d="M16.500 15l1 2.500 2.500 1-2.500 1-1 2.500-1-2.500-2.500-1 2.500-1z" fill="#ced0d6"/></svg>

<!-- status bar -->
<div class="a" style="left:0;top:1002px;width:1918px;height:30px;background:#2b2d30;border-top:1px solid #1e1f22"></div>
<div class="a" style="left:14px;top:1012px;width:7px;height:10px;border:1.200px solid #548af7;border-radius:2px"></div>
<div class="bc" style="left:25px">ListView</div>
<svg class="bch" style="left:78px" viewBox="0 0 10 12"><path d="M3 2l4 4-4 4"/></svg>
<div class="a" style="left:95px;top:1012px;width:7px;height:10px;border:1.200px solid #548af7;border-radius:2px"></div>
<div class="bc" style="left:107px">app</div>
<svg class="bch" style="left:137px" viewBox="0 0 10 12"><path d="M3 2l4 4-4 4"/></svg>
<div class="bc" style="left:154px">src</div>
<svg class="bch" style="left:178px" viewBox="0 0 10 12"><path d="M3 2l4 4-4 4"/></svg>
<div class="a" style="left:195px;top:1012px;width:7px;height:10px;border:1.200px solid #548af7;border-radius:2px"></div>
<div class="bc" style="left:207px">main</div>
<svg class="bch" style="left:242px" viewBox="0 0 10 12"><path d="M3 2l4 4-4 4"/></svg>
<div class="bc" style="left:258px">java</div>
<svg class="bch" style="left:289px" viewBox="0 0 10 12"><path d="M3 2l4 4-4 4"/></svg>
<div class="bc" style="left:306px">cn</div>
<svg class="bch" style="left:326px" viewBox="0 0 10 12"><path d="M3 2l4 4-4 4"/></svg>
<div class="bc" style="left:343px">itcast</div>
<svg class="bch" style="left:380px" viewBox="0 0 10 12"><path d="M3 2l4 4-4 4"/></svg>
<div class="bc" style="left:397px">relativelayout</div>
<svg class="bch" style="left:481px" viewBox="0 0 10 12"><path d="M3 2l4 4-4 4"/></svg>
<svg class="i" style="left:499px;top:1009px;width:16px;height:16px" viewBox="0 0 16 16"><use href="#cl"/></svg>
<div class="bc" style="left:518px">MainActivity</div>
<svg class="bch" style="left:594px" viewBox="0 0 10 12"><path d="M3 2l4 4-4 4"/></svg>
<svg class="i" style="left:611px;top:1009px;width:16px;height:16px" viewBox="0 0 16 16"><circle cx="8" cy="8" r="6.700" fill="#4a2530" stroke="#db5c5c" stroke-width="1.200"/><path d="M5 11V6.500q0-1 1.500-1T8 6.500V11M8 6.500q0-1 1.500-1t1.500 1V11" stroke="#e58282" fill="none"/></svg>
<div class="bc" style="left:631px">onCreate</div>
<div class="t" style="left:1598px;top:1008px;line-height:18px;color:#7c7f85;font-size:12.500px;word-spacing:12px">34:43 CRLF UTF-8</div>
<svg class="i" style="left:1883px;top:1007px;stroke:#9da0a8" viewBox="0 0 20 20"><circle cx="10" cy="10" r="6"/><path d="M10 7v3.500M10 12.500v.1"/></svg>

<!-- taskbar -->
<div class="a" style="left:0;top:1032px;width:1918px;height:22px;background:linear-gradient(90deg,#e6ebef 0,#e6eaee 30%,#e9e8ea 50%,#f3e1e0 70%,#efdde0 85%,#e3e3f0 100%);overflow:hidden">
  <div class="a" style="left:20px;top:13px;width:20px;height:20px;border-radius:50%;background:#f5a623"></div>
  <div class="t" style="left:49px;top:11px;line-height:13px;font-size:11px;color:#222">25°C</div>
  <div class="a" style="left:697px;top:13px;width:11px;height:11px;background:#3da5ec"></div>
  <div class="a" style="left:709px;top:13px;width:11px;height:11px;background:#5cc0f2"></div>
  <div class="a" style="left:735px;top:9px;width:98px;height:30px;background:#fbfbfb;border-radius:15px"></div>
  <svg class="i" style="left:757px;top:13px;width:14px;height:14px;stroke:#333" viewBox="0 0 14 14"><circle cx="6" cy="6" r="4.500"/></svg>
  <div class="t" style="left:775px;top:13px;line-height:14px;font-size:12px;color:#333">搜索</div>
  <div class="a" style="left:846px;top:16px;width:14px;height:10px;background:#444"></div>
  <div class="a" style="left:853px;top:10px;width:16px;height:14px;background:#fdfdfd;border:1px solid #ddd"></div>
  <div class="a" style="left:891px;top:11px;width:24px;height:24px;border-radius:50%;background:linear-gradient(135deg,#38c6a8,#1b7fd0)"></div>
  <div class="a" style="left:935px;top:12px;width:25px;height:16px;background:#f2c744;border-radius:2px"></div>
  <div class="a" style="left:982px;top:10px;width:18px;height:18px;background:linear-gradient(#9db8f5,#4ea6f0);border-radius:3px"></div>
  <div class="a" style="left:1023px;top:15px;width:24px;height:12px;background:#e63a36;border-radius:2px"></div>
  <div class="a" style="left:1068px;top:12px;width:22px;height:16px;background:#dc322f;border-radius:4px"></div>
  <div class="a" style="left:1111px;top:12px;width:24px;height:16px;background:#2ed573;border-radius:5px"></div>
  <div class="a" style="left:1118px;top:19px;width:11px;height:10px;background:#fff;border-radius:50%"></div>
  <div class="a" style="left:1155px;top:13px;width:20px;height:20px;border:3px solid #4a98e6;border-radius:50%"></div>
  <div class="a" style="left:1192px;top:5px;width:38px;height:30px;background:#f6eeef;border-radius:4px"></div>
  <div class="a" style="left:1201px;top:13px;width:20px;height:20px;background:#fff;border-radius:50%"></div>
  <div class="a" style="left:1208px;top:13px;width:6px;height:8px;background:#3a5fb0"></div>
  <div class="a" style="left:1652px;top:20px;width:15px;height:6px;background:#df3b36"></div>
  <div class="t" style="left:1847px;top:9px;line-height:13px;font-size:11.500px;color:#222">13:18</div>
  <div class="t" style="left:1683px;top:19px;line-height:13px;font-size:12px;color:#333">↻</div>
  <div class="t" style="left:1716px;top:18px;line-height:14px;font-size:12px;color:#333">中</div>
  <div class="a" style="left:1748px;top:20px;width:14px;height:14px;border:1px solid #333;border-radius:50%"></div>
  <div class="a" style="left:1886px;top:19px;width:11px;height:8px;background:#222;border-radius:3px 3px 0 0"></div>
</div>

<!-- watermark -->
<div class="t" style="left:1473px;top:998px;line-height:30px;font-size:24.600px;word-spacing:3px;color:#dcdcdc;text-shadow:1px 1px 1px #222,-1px 0 1px #444">掘金技术社区 @ 用户9426118446291</div>
</body></html>
